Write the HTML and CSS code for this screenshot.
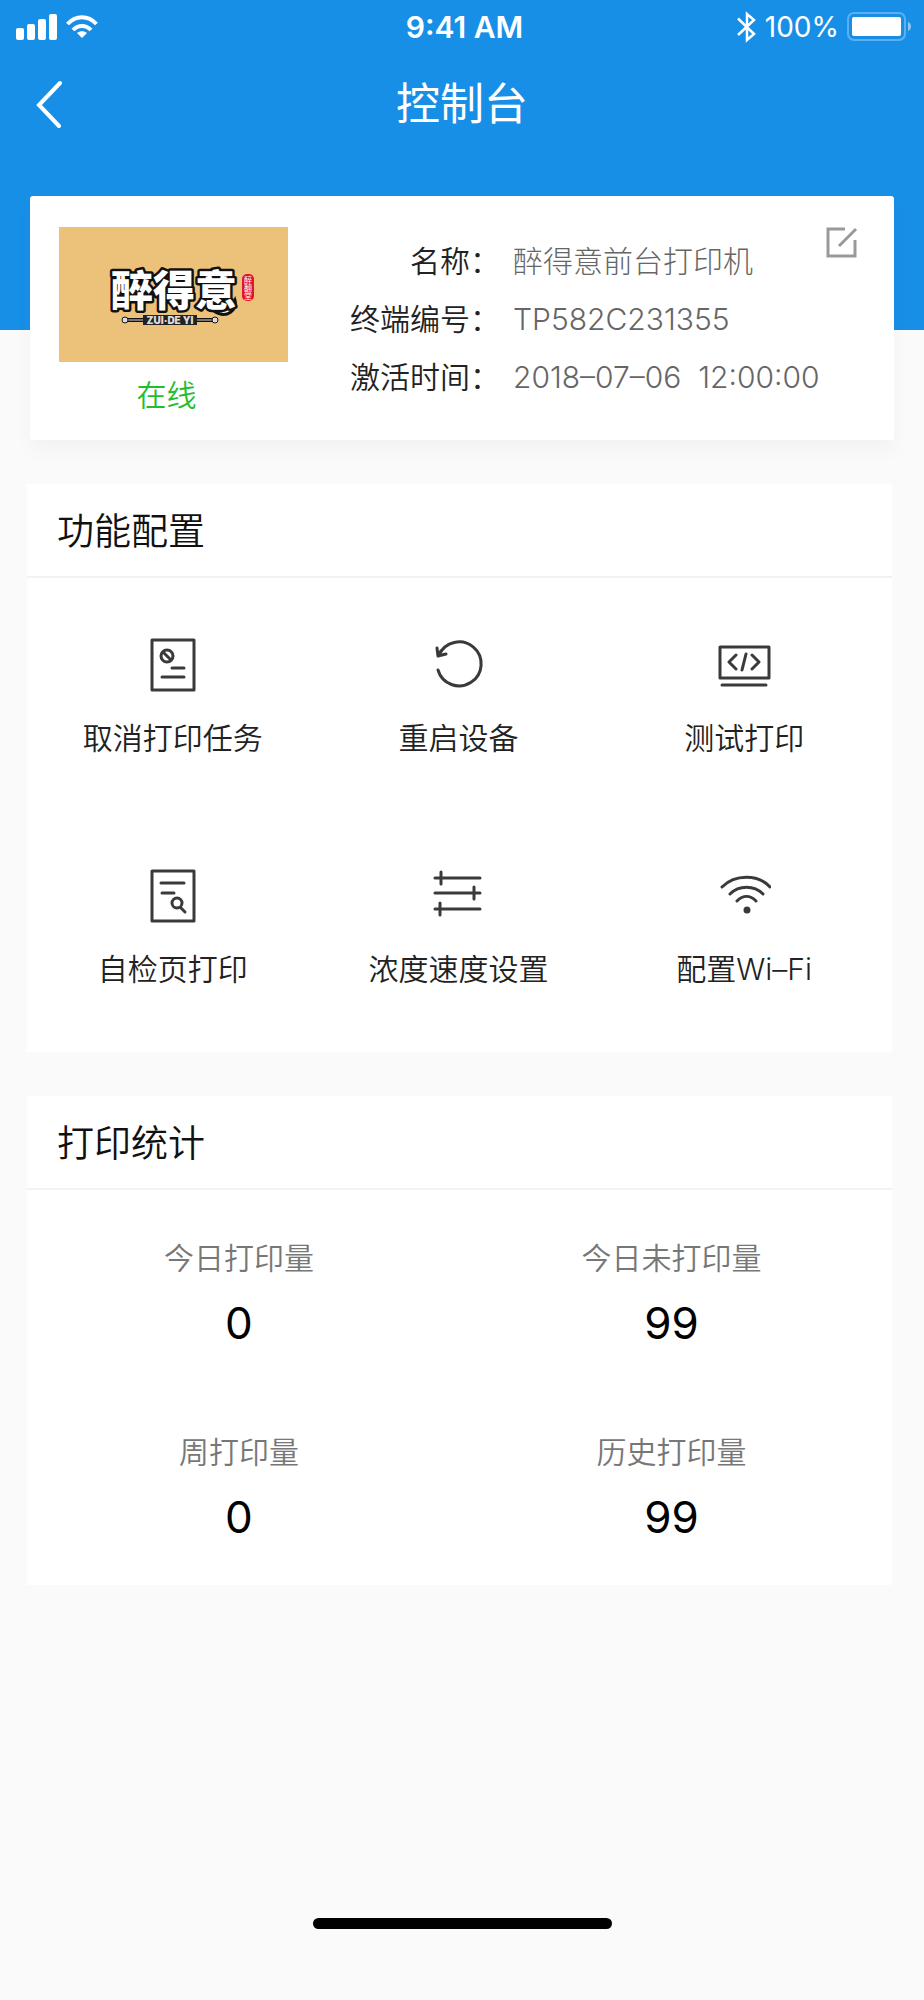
FILE: index.html
```html
<!DOCTYPE html>
<html lang="zh-CN">
  <head>
    <meta charset="UTF-8" />
    <meta name="viewport" content="width=device-width, initial-scale=1.0" />
    <title>控制台</title>
    <link rel="stylesheet" href="styles.css">
  </head>
  <body>
    <header class="header">
      <div class="status-bar">
        <div class="status-left">
          <svg width="42" height="28" viewBox="0 0 42 28" fill="#fff">
            <rect x="0" y="15" width="8" height="12" rx="2" />
            <rect x="11" y="11" width="8" height="16" rx="2" />
            <rect x="22" y="6" width="8" height="21" rx="2" />
            <rect x="33" y="1" width="8" height="26" rx="2" />
          </svg>
          <svg width="32" height="28" viewBox="0 0 32 28" fill="none" stroke="#fff" stroke-width="4">
            <path d="M1.5 11C10 2 22 2 30.5 11" />
            <path d="M7 17C12 11.5 20 11.5 25 17" />
            <path d="M11 20C14 17.5 18 17.5 21 20L16 25Z" fill="#fff" stroke="none" />
          </svg>
        </div>
        <span class="status-time">9:41 AM</span>
        <div class="status-right">
          <svg width="20" height="34" viewBox="0 0 20 34" fill="none" stroke="#fff" stroke-width="2.5">
            <path d="M1 8.5L17 24L10 30V4L17 10L1 25" />
          </svg>
          <span class="battery-text">100%</span>
          <svg width="66" height="30" viewBox="0 0 66 30" fill="none">
            <rect x="1" y="1" width="57" height="27" rx="6" stroke="#fff" stroke-opacity="0.3" stroke-width="2" />
            <rect x="5" y="5" width="49" height="19" rx="2" fill="#fff" />
            <path d="M61 10C65 11 65 18 61 19Z" fill="#fff" fill-opacity="0.5" />
          </svg>
        </div>
      </div>
      <div class="nav-bar">
        <a href="#" class="back" aria-label="返回">
          <svg width="28" height="48" viewBox="0 0 28 48" fill="none" stroke="#fff" stroke-width="4" stroke-linecap="round">
            <path d="M24 3L3 25L23 46" />
          </svg>
        </a>
        <h1>控制台</h1>
      </div>
    </header>

    <main>
      <section class="device-card">
        <div class="device-logo">
          <svg class="logo" width="229" height="135" viewBox="0 0 229 135">
            <rect width="229" height="135" fill="#ecc27b" />
            <path d="M155 79C163 86 171 84 176 73C179 82 168 93 155 84Z" fill="#fff" stroke="#111" stroke-width="3" />
            <text class="logo-name" x="52" y="79">醉得意</text>
            <path d="M66 93H84M138 93H156" stroke="#111" stroke-width="4" />
            <path d="M66 93H84M138 93H156" stroke="#ddd" stroke-width="1" />
            <circle cx="66" cy="93" r="3" fill="#ddd" stroke="#111" />
            <circle cx="156" cy="93" r="3" fill="#ddd" stroke="#111" />
            <rect x="84" y="88" width="54" height="10" fill="#222" />
            <text class="logo-pinyin" x="111" y="97">ZUI·DE YI</text>
            <rect x="183" y="47" width="12" height="27" rx="5" fill="#e5132b" />
            <text class="logo-seal" x="189" y="56">醉</text>
            <text class="logo-seal" x="189" y="64">翻</text>
            <text class="logo-seal" x="189" y="72">堂</text>
          </svg>
          <p class="online">在线</p>
        </div>
        <dl class="device-info">
          <dt>名称：</dt>
          <dd>醉得意前台打印机</dd>
          <dt>终端编号：</dt>
          <dd>TP582C231355</dd>
          <dt>激活时间：</dt>
          <dd>2018–07–06&nbsp; 12:00:00</dd>
        </dl>
        <button type="button" class="edit" aria-label="编辑">
          <svg width="32" height="32" viewBox="0 0 32 32" fill="none" stroke="#999" stroke-width="3">
            <path d="M19 2H2V29H29V13M13 19L30 2" />
          </svg>
        </button>
      </section>

      <section class="panel">
        <h2>功能配置</h2>
        <div class="features">
          <button type="button" class="feature">
            <svg width="54" height="54" viewBox="0 0 54 54">
              <rect x="6" y="2" width="42" height="50" />
              <circle cx="21" cy="18" r="6" />
              <path d="M17 14L25 22M26 30H38M16 39H38" />
            </svg>
            <span>取消打印任务</span>
          </button>
          <button type="button" class="feature">
            <svg width="54" height="54" viewBox="0 0 54 54">
              <path d="M8 17A22 22 0 1 1 7 32" />
              <path d="M6 10L7 18L15 16M7 18L10 13" />
            </svg>
            <span>重启设备</span>
          </button>
          <button type="button" class="feature">
            <svg width="54" height="54" viewBox="0 0 54 54">
              <path d="M3 9H52V40H3ZM5 47H49M19 17L12 24L19 31M29 16L25 32M35 17L42 24L35 31" />
            </svg>
            <span>测试打印</span>
          </button>
          <button type="button" class="feature">
            <svg width="54" height="54" viewBox="0 0 54 54">
              <rect x="6" y="2" width="42" height="50" />
              <path d="M15 14H38M16 24H28M35 39L39 43" />
              <circle cx="31" cy="34" r="5" />
            </svg>
            <span>自检页打印</span>
          </button>
          <button type="button" class="feature">
            <svg width="54" height="54" viewBox="0 0 54 54">
              <path d="M4 9H49M4 24H49M4 40H49M10 3V15M43 18V30M9 34V46" />
            </svg>
            <span>浓度速度设置</span>
          </button>
          <button type="button" class="feature">
            <svg width="54" height="54" viewBox="0 0 54 54">
              <path d="M5 18C18 5 41 5 53 18M13 25C22 16 37 16 46 25M20 32C26 26 33 26 39 32" />
              <circle cx="30" cy="41" r="2" fill="#3a3a3a" />
            </svg>
            <span>配置Wi–Fi</span>
          </button>
        </div>
      </section>

      <section class="panel">
        <h2>打印统计</h2>
        <dl class="stats">
          <div class="stat">
            <dt>今日打印量</dt>
            <dd>0</dd>
          </div>
          <div class="stat">
            <dt>今日未打印量</dt>
            <dd>99</dd>
          </div>
          <div class="stat">
            <dt>周打印量</dt>
            <dd>0</dd>
          </div>
          <div class="stat">
            <dt>历史打印量</dt>
            <dd>99</dd>
          </div>
        </dl>
      </section>
    </main>

    <div class="home-indicator"></div>
  </body>
</html>
```
FILE: styles.css
```css
* {
  box-sizing: border-box;
}

body {
  font-family: "Inter", "Noto Sans CJK SC", sans-serif;
  font-size: 30px;
  font-weight: 350;
  line-height: 42px;
  color: #222;
  background-color: #fafafa;
  margin: 0;
  min-height: 100vh;
  display: flex;
  flex-direction: column;
}

h1,
h2,
p,
dl,
dd {
  margin: 0;
  font-weight: 350;
}

button {
  font: inherit;
  color: inherit;
  background: none;
  border: none;
  padding: 0;
  cursor: pointer;
}

svg {
  display: block;
}

.header {
  background-color: #188fe7;
  color: #fff;
  padding-bottom: 176px;
}

.status-bar {
  display: grid;
  grid-template-columns: 1fr auto 1fr;
  align-items: center;
  height: 54px;
  padding: 0 11px 0 16px;
  font-size: 28px;
}

.status-left,
.status-right {
  display: flex;
  align-items: center;
  gap: 8px;
}

.status-right {
  justify-content: flex-end;
}

.status-time {
  font-size: 30px;
  font-weight: 600;
}

.battery-text {
  font-weight: 400;
}

.nav-bar {
  display: grid;
  grid-template-columns: 1fr auto 1fr;
  align-items: center;
  height: 100px;
  padding: 0 36px;
}

.nav-bar h1 {
  font-size: 44px;
  font-weight: 400;
  line-height: 60px;
}

/* Card overlaps the blue header */
.device-card {
  display: flex;
  align-items: flex-start;
  margin: -134px 30px 0;
  padding: 31px 36px 24px 29px;
  background-color: #fff;
  border-radius: 3px;
  box-shadow: 0 12px 20px rgba(0, 0, 0, 0.03);
}

.online {
  margin-top: 12px;
  padding-right: 14px;
  text-align: center;
  color: #1fc02f;
}

.logo text {
  font-family: "Noto Sans CJK SC", sans-serif;
  font-weight: 900;
  fill: #fff;
}

.logo .logo-name {
  font-size: 42px;
  stroke: #111;
  stroke-width: 5px;
  stroke-linejoin: round;
  paint-order: stroke;
}

.logo .logo-pinyin {
  font-family: "Inter", sans-serif;
  font-size: 10px;
  fill: #ddd;
  text-anchor: middle;
}

.logo .logo-seal {
  font-size: 8px;
  font-weight: 400;
  text-anchor: middle;
}

.device-info {
  flex: 1;
  display: grid;
  grid-template-columns: auto 1fr;
  grid-auto-rows: 58px;
  align-items: center;
  column-gap: 13px;
  margin: 5px 0 0 62px;
}

.device-info dt {
  text-align: right;
}

.device-info dd {
  font-weight: 300;
  color: #666;
  white-space: nowrap;
}

.edit {
  margin-left: -32px;
}

.panel {
  margin: 44px 32px 0 27px;
  background-color: #fff;
}

.panel h2 {
  padding: 22px 30px 18px;
  font-size: 37px;
  line-height: 52px;
  color: #111;
  border-bottom: 2px solid #f2f2f2;
}

.features {
  display: grid;
  grid-template-columns: repeat(3, 1fr);
  row-gap: 110px;
  padding: 60px 5px 62px 3px;
}

.feature {
  display: flex;
  flex-direction: column;
  align-items: center;
  gap: 25px;
}

.feature svg {
  fill: none;
  stroke: #3a3a3a;
  stroke-width: 3px;
  stroke-linecap: round;
  stroke-linejoin: round;
}

.stats {
  display: grid;
  grid-template-columns: 49fr 51fr;
  row-gap: 80px;
  padding: 47px 0 40px;
}

.stat {
  text-align: center;
}

.stat dt {
  color: #777;
}

.stat dd {
  margin-top: 16px;
  font-size: 44px;
  font-weight: 400;
  line-height: 56px;
  color: #000;
}

.home-indicator {
  width: 299px;
  height: 11px;
  margin: auto auto 71px;
  border-radius: 6px;
  background-color: #000;
}
```
